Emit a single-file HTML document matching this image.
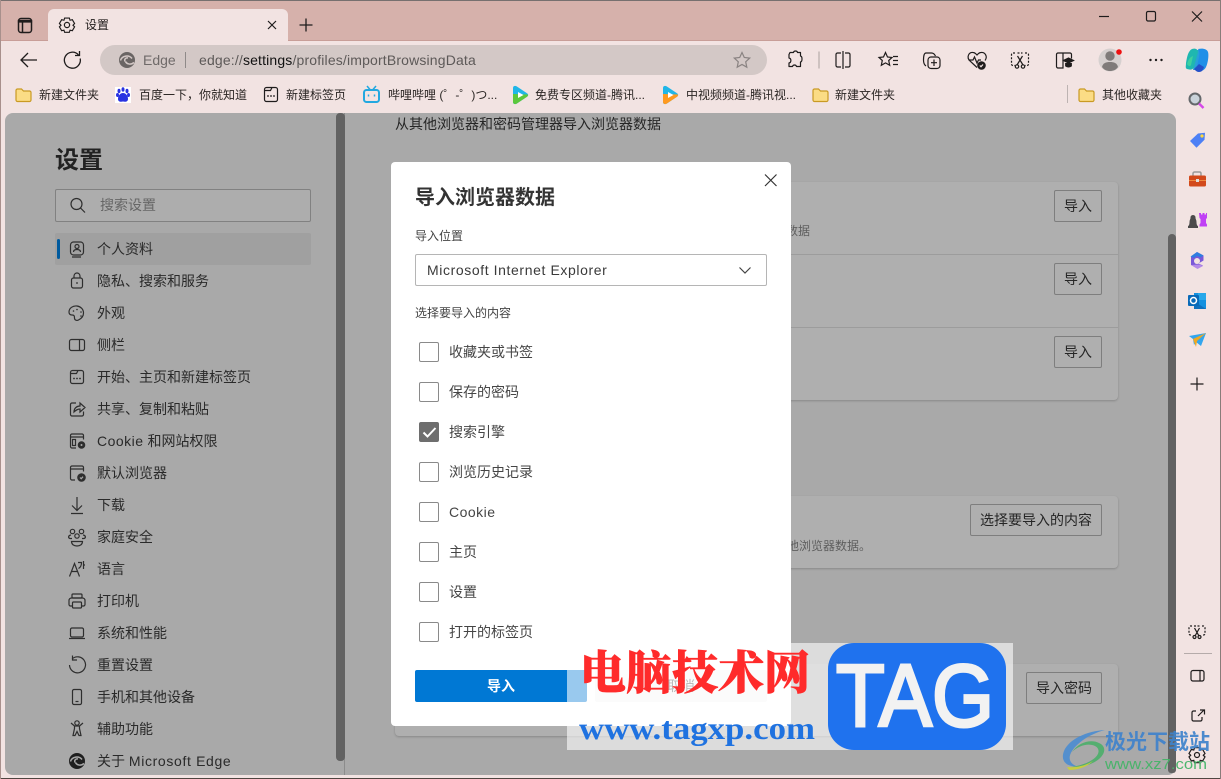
<!DOCTYPE html>
<html lang="zh"><head><meta charset="utf-8"><title>设置</title>
<style>
html,body{margin:0;padding:0}
body{width:1221px;height:779px;overflow:hidden;position:relative;background:#f2e3e2;font-family:"Liberation Sans","Noto Sans CJK SC",sans-serif;color:#262626}
.a{position:absolute;white-space:nowrap}
.t{position:absolute;white-space:nowrap;line-height:20px;height:20px}
.bm{font-size:12px;color:#2b2624;top:85px}
.nav{font-size:14px;left:97px;color:#2a2a2a}
.btn{position:absolute;box-sizing:border-box;border:1px solid #7e7e7e;border-radius:2px;font-size:14px;text-align:center;color:#262626;height:32px;line-height:31px}
.card{position:absolute;background:#afafaf;border-radius:4px;box-shadow:0 1px 2px rgba(0,0,0,.2);left:395px;width:723px}
.cb{position:absolute;left:419px;width:20px;height:20px;box-sizing:border-box;border:1px solid #8a8a8a;border-radius:2px;background:#fff}
.cl{position:absolute;left:449px;font-size:14px;color:#454545;line-height:20px;white-space:nowrap}
svg{position:absolute;overflow:visible}
</style></head><body>
<div class="a" style="left:0;top:0;width:1221px;height:41px;background:#d6b1ab;border-top:1px solid #77706f;box-sizing:border-box"></div>
<div class="a" style="left:0;top:40px;width:1221px;height:1px;background:#c89e98"></div>
<div class="a" style="left:48px;top:9px;width:240px;height:32px;background:#f2e3e2;border-radius:6px 6px 0 0"></div>
<div class="t" style="left:85px;top:15px;font-size:12px;color:#1f1a1a">设置</div>
<div class="a" style="left:100px;top:45px;width:667px;height:30px;background:#d3c8c6;border-radius:15px"></div>
<div class="t" style="left:143px;top:50px;font-size:14px;color:#6f6a69">Edge</div>
<div class="a" style="left:185px;top:52px;width:1px;height:16px;background:#8f8a89"></div>
<div class="t" style="left:199px;top:50px;font-size:14px;color:#5d5958;letter-spacing:.16px">edge://<span style="color:#111">settings</span>/profiles/importBrowsingData</div>

<div class="t bm" style="left:39px">新建文件夹</div>
<div class="t bm" style="left:139px">百度一下，你就知道</div>
<div class="t bm" style="left:286px">新建标签页</div>
<div class="t bm" style="left:388px">哔哩哔哩 (゜-゜)つ...</div>
<div class="t bm" style="left:535px">免费专区频道-腾讯...</div>
<div class="t bm" style="left:686px">中视频频道-腾讯视...</div>
<div class="t bm" style="left:835px">新建文件夹</div>
<div class="a" style="left:1067px;top:85px;width:1px;height:18px;background:#bdb3b2"></div>
<div class="t bm" style="left:1102px">其他收藏夹</div>

<!-- content -->
<div class="a" style="left:5px;top:113px;width:1171px;height:662px;background:#a9a9a9;border-radius:8px;overflow:hidden"></div>
<div class="a" style="left:344px;top:113px;width:1px;height:662px;background:#8c8c8c"></div>
<div class="a" style="left:336px;top:113px;width:9px;height:648px;background:#626262;border-radius:4px"></div>
<div class="a" style="left:1168px;top:234px;width:8px;height:539px;background:#626262;border-radius:4px 4px 3px 3px"></div>

<div class="t" style="left:55px;top:147px;font-size:24px;line-height:28px;height:28px;font-weight:700;color:#222">设置</div>
<div class="a" style="left:55px;top:189px;width:256px;height:33px;box-sizing:border-box;border:1px solid #818181;border-radius:2px;background:#adadad"></div>
<div class="t" style="left:100px;top:195px;font-size:14px;color:#666">搜索设置</div>
<div class="a" style="left:55px;top:233px;width:256px;height:32px;background:#a0a0a0;border-radius:2px"></div>
<div class="a" style="left:57px;top:239px;width:3px;height:20px;background:#005a9e;border-radius:2px"></div>

<div class="t nav" style="top:239px">个人资料</div>
<div class="t nav" style="top:271px">隐私、搜索和服务</div>
<div class="t nav" style="top:303px">外观</div>
<div class="t nav" style="top:335px">侧栏</div>
<div class="t nav" style="top:367px">开始、主页和新建标签页</div>
<div class="t nav" style="top:399px">共享、复制和粘贴</div>
<div class="t nav" style="top:431px"><span style="letter-spacing:.5px">Cookie</span> 和网站权限</div>
<div class="t nav" style="top:463px">默认浏览器</div>
<div class="t nav" style="top:495px">下载</div>
<div class="t nav" style="top:527px">家庭安全</div>
<div class="t nav" style="top:559px">语言</div>
<div class="t nav" style="top:591px">打印机</div>
<div class="t nav" style="top:623px">系统和性能</div>
<div class="t nav" style="top:655px">重置设置</div>
<div class="t nav" style="top:687px">手机和其他设备</div>
<div class="t nav" style="top:719px">辅助功能</div>
<div class="t nav" style="top:751px">关于 <span style="letter-spacing:.65px">Microsoft Edge</span></div>

<div class="t" style="left:395px;top:114px;font-size:14px;color:#262626">从其他浏览器和密码管理器导入浏览器数据</div>

<div class="card" style="top:182px;height:218px"></div>
<div class="a" style="left:395px;top:254px;width:723px;height:1px;background:#9c9c9c"></div>
<div class="a" style="left:395px;top:327px;width:723px;height:1px;background:#9c9c9c"></div>
<div class="btn" style="left:1054px;top:190px;width:48px">导入</div>
<div class="btn" style="left:1054px;top:263px;width:48px">导入</div>
<div class="btn" style="left:1054px;top:336px;width:48px">导入</div>
<div class="t" style="left:762px;top:221px;font-size:12px;color:#5e5e5e">导入数据</div>

<div class="card" style="top:496px;height:72px"></div>
<div class="btn" style="left:970px;top:504px;width:132px">选择要导入的内容</div>
<div class="t" style="left:775px;top:536px;font-size:12px;color:#5e5e5e">其他浏览器数据。</div>

<div class="card" style="top:664px;height:72px"></div>
<div class="btn" style="left:1026px;top:672px;width:76px">导入密码</div>

<!-- dialog -->
<div class="a" style="left:391px;top:162px;width:400px;height:564px;background:#fff;border-radius:4px"></div>
<div class="t" style="left:415px;top:184px;font-size:20px;line-height:28px;height:28px;font-weight:700;color:#333">导入浏览器数据</div>
<div class="t" style="left:415px;top:226px;font-size:12px;color:#444">导入位置</div>
<div class="a" style="left:415px;top:254px;width:352px;height:32px;box-sizing:border-box;border:1px solid #b5b5b5;border-radius:2px;background:#fff"></div>
<div class="t" style="left:427px;top:260px;font-size:14px;color:#3a3a3a;letter-spacing:.6px">Microsoft Internet Explorer</div>
<div class="t" style="left:415px;top:303px;font-size:12px;color:#444">选择要导入的内容</div>

<div class="cb" style="top:342px"></div><div class="cl" style="top:342px">收藏夹或书签</div>
<div class="cb" style="top:382px"></div><div class="cl" style="top:382px">保存的密码</div>
<div class="cb" style="top:422px;background:#6e6e6e;border-color:#6e6e6e"></div><div class="cl" style="top:422px">搜索引擎</div>
<div class="cb" style="top:462px"></div><div class="cl" style="top:462px">浏览历史记录</div>
<div class="cb" style="top:502px"></div><div class="cl" style="top:502px;letter-spacing:.5px">Cookie</div>
<div class="cb" style="top:542px"></div><div class="cl" style="top:542px">主页</div>
<div class="cb" style="top:582px"></div><div class="cl" style="top:582px">设置</div>
<div class="cb" style="top:622px"></div><div class="cl" style="top:622px">打开的标签页</div>

<div class="a" style="left:415px;top:670px;width:172px;height:32px;background:#0078d4;border-radius:2px;color:#fff;font-size:14px;font-weight:700;line-height:32px;text-align:center">导入</div>
<div class="a" style="left:595px;top:670px;width:172px;height:32px;background:#f5f5f5;border-radius:2px;color:#555;font-size:14px;line-height:32px;text-align:center">取消</div>

<!-- all icons -->
<svg width="1221" height="779" style="left:0;top:0" fill="none" stroke="#1f1c1c" stroke-width="1.2">
<!-- window -->
<rect x="18.5" y="18.5" width="13" height="14" rx="2.5" stroke-width="1.5"/><path d="M18.5 20.500h13v1.500h-13z" fill="#1f1c1c"/><path d="M22.500 22v10.500" stroke-width="1.500"/>
<g transform="translate(67,25)"><circle r="2.6"/><path d="M-2.5-7.3h5l.7 2.3 2.4-.6 2.4 4.1-1.7 1.7 1.7 1.7-2.4 4.1-2.4-.6-.7 2.3h-5l-.7-2.3-2.4.6-2.4-4.1 1.7-1.7-1.7-1.7 2.4-4.1 2.4.6z" transform="scale(.95)"/></g>
<path d="M268 21l8 8M276 21l-8 8" stroke-width="1.2"/>
<path d="M306 18.5v13M299.500 25h13" stroke-width="1.3"/>
<path d="M1099 16.500h10"/><rect x="1146.500" y="11.500" width="9" height="9.500" rx="1.500"/><path d="M1192 11.500l10 10M1202 11.500l-10 10"/>
<!-- nav -->
<path d="M37 60H21.500M28 53l-7 7 7 7" stroke-width="1.300"/>
<path d="M80.200 58.500a8 8 0 1 1-1.800-3.600M79.500 51v4.500h-4.500" stroke-width="1.300"/>
<g transform="translate(127,60)"><circle r="8" fill="#6a6564" stroke="none"/><path d="M-6.500.5C-5-4.500 2-5.500 5-1.500M-1.500 1.500C0 4.500 4 5 7 2.500M-2 1.500C-3-1 -1-2.500 1-2" stroke="#d3c8c6" stroke-width="1.500"/></g>
<path d="M742 52.500l2.300 5 5.400.6-4 3.700 1.100 5.400-4.800-2.700-4.800 2.700 1.100-5.400-4-3.700 5.400-.6z" stroke="#8a8382"/>
<!-- toolbar -->
<path d="M791 53h3.500c.3-2 3.700-2 4 0h3v3.500c2 .3 2 5.700 0 6v4.500h-4c-.5-2-3.500-2-4 0h-3.500v-3.500c2.500-.5 2.500-4.500 0-5v-3.500z M789 59" transform="translate(-1,-.5)" stroke-linejoin="round"/>
<path d="M819 51.500v17" stroke="#b5abaa"/>
<path d="M843 51v18M841 53h-3.500a1.500 1.500 0 0 0-1.500 1.500v11a1.500 1.500 0 0 0 1.500 1.500h3.500M845 53h3.500a1.500 1.500 0 0 1 1.500 1.500v11a1.500 1.500 0 0 1-1.500 1.500h-3.500"/>
<path d="M885.500 52.500l2 4.500 4.500.5-3.300 3 1 4.800-4.200-2.400-4.200 2.400 1-4.800-3.300-3 4.500-.5zM893 56.500h5M893 60.500h5M893 64.500h5"/>
<path d="M926 66c-1.500-1-2.500-3-2.500-6 0-4 .5-7 2.500-7h5.500c2 0 3 1 4 3"/><rect x="928" y="57" width="12" height="11.500" rx="3"/><path d="M934 59.500v6.500M931 62.700h6"/>
<path d="M977 67.500l-7-6.500c-4-4-1-9 3-8.500 2 0 3 1.500 4 2.500 1-1 2-2.500 4-2.500 4-.5 7 4 4 8M968.500 60h4.500l1.500-3 2.500 6 1.500-3h2.500"/><circle cx="981.500" cy="65.500" r="3.700" fill="#1f1c1c"/><path d="M979.800 65.500l1.200 1.200 2-2.200" stroke="#f2e3e2"/>
<path d="M1015 53h-2a1.500 1.500 0 0 0-1.500 1.500v9.500a1.500 1.500 0 0 0 1.500 1.500h2M1025 53h2a1.500 1.500 0 0 1 1.500 1.500v9.500a1.500 1.500 0 0 1-1.500 1.500h-2M1017.500 53h5" stroke-dasharray="2 1.500"/><path d="M1017.500 56l5.500 9M1022.500 56l-5.500 9"/><circle cx="1017" cy="66.500" r="1.700"/><circle cx="1023" cy="66.500" r="1.700"/>
<path d="M1063 53h-5a1.500 1.500 0 0 0-1.500 1.500v12a1.500 1.500 0 0 0 1.500 1.500h5v-15h7a1.500 1.500 0 0 1 1.500 1.500v4M1063 53v15"/><path d="M1063 60.500l5.500-2.700 5.500 2.700-5.500 2.700zM1065.500 63v3c2 1.500 4 1.500 6 0v-3" fill="#1f1c1c" stroke-width=".8"/>
<circle cx="1110" cy="60" r="11.500" fill="#d6d0cf" stroke="none"/><circle cx="1110" cy="56" r="4.700" fill="#7f7b7a" stroke="none"/><path d="M1102 67c1-4 4-5 8-5s7 1 8 5c-2 3-5 4-8 4s-6-1-8-4z" fill="#7f7b7a" stroke="none"/><circle cx="1119" cy="52" r="2.800" fill="#ee1111" stroke="none"/>
<g fill="#1f1c1c" stroke="none"><circle cx="1150.500" cy="60" r="1.200"/><circle cx="1156" cy="60" r="1.200"/><circle cx="1161.500" cy="60" r="1.200"/></g>
<!-- copilot -->
<path d="M1196 50h6l-4 20h-5z" fill="#2a9fd8" stroke="none"/>
<path d="M1192 49c3-1 6 0 6 3l-4 15c-1 3-4 3-7 2-2-1-1-3-1-6 1-6 2-12 6-14z" fill="#1fb7b0" stroke="none"/><path d="M1198 49c5-1 9 0 10 3s0 11-2 15c-2 4-6 5-10 4l3-14c1-4 0-6-1-8z" fill="#1f8fe8" stroke="none"/><path d="M1194 69c2 2 3 3 5 3 3 0 4-2 5-5l-5-3z" fill="#2450c8" stroke="none"/><path d="M1187 64c1-4 3-7 6-8l-2 9c-1 2-3 1-4-1z" fill="#3ed0a0" stroke="none"/>
<!-- bookmarks icons -->
<g id="f"><path d="M16 90.500a1.500 1.500 0 0 1 1.500-1.500h4l2 2h6a1.500 1.500 0 0 1 1.500 1.500v7.500a1.500 1.500 0 0 1-1.500 1.500h-12a1.500 1.500 0 0 1-1.500-1.500z" fill="#fbdc85" stroke="#c99a24"/></g>
<path d="M813 90.500a1.500 1.500 0 0 1 1.500-1.500h4l2 2h6a1.500 1.500 0 0 1 1.500 1.500v7.500a1.500 1.500 0 0 1-1.500 1.500h-12a1.500 1.500 0 0 1-1.500-1.500z" fill="#fbdc85" stroke="#c99a24"/>
<path d="M1079 90.500a1.500 1.500 0 0 1 1.500-1.500h4l2 2h6a1.500 1.500 0 0 1 1.500 1.500v7.500a1.500 1.500 0 0 1-1.500 1.500h-12a1.500 1.500 0 0 1-1.500-1.500z" fill="#fbdc85" stroke="#c99a24"/>
<g fill="#2932e1" stroke="none"><rect x="115" y="87" width="16" height="16" fill="#fff"/><ellipse cx="119" cy="91" rx="1.500" ry="2.200"/><ellipse cx="123" cy="89.500" rx="1.500" ry="2.200"/><ellipse cx="127" cy="91" rx="1.500" ry="2.200"/><ellipse cx="117.500" cy="95" rx="1.500" ry="2"/><ellipse cx="128.500" cy="95" rx="1.500" ry="2"/><path d="M123 93c3 0 5 3 5 6 0 3-3 3-5 2.500-2 .5-5 .5-5-2.500 0-3 2-6 5-6z"/></g>
<rect x="264.500" y="87.500" width="13" height="14" rx="2"/><path d="M264.500 90.500h6l1.500-3" /><g fill="#1f1c1c" stroke="none"><circle cx="268" cy="96" r=".9"/><circle cx="271" cy="96" r=".9"/><circle cx="274" cy="96" r=".9"/></g>
<rect x="364" y="90" width="15" height="12" rx="2.500" stroke="#22a8e0" stroke-width="2"/><path d="M367 86l3 3.500M376 86l-3 3.500" stroke="#22a8e0" stroke-width="1.500"/><path d="M368.500 94.500v2M374.500 94.500v2" stroke="#22a8e0" stroke-width="1.500"/>
<g id="p"><path d="M513 88c0-2 2-2.500 3.500-1.700l10.500 7c1.500 1 1.500 2.500 0 3.500l-10.500 7c-1.500.8-3.500.3-3.500-1.700z" fill="#20b6e8" stroke="none"/><path d="M513 94v8c0 2 2 2.500 3.500 1.700l10.500-7c1-.7 1.300-1.500 1-2.200z" fill="#5cc83c" stroke="none"/><path d="M518 92l5.500 3-5.500 3z" fill="#fff" stroke="none"/></g>
<path d="M663 88c0-2 2-2.500 3.500-1.700l10.500 7c1.500 1 1.500 2.500 0 3.500l-10.500 7c-1.500.8-3.500.3-3.500-1.700z" fill="#20b6e8" stroke="none"/><path d="M663 94v8c0 2 2 2.500 3.500 1.700l10.500-7c1-.7 1.300-1.500 1-2.200z" fill="#ff9a1f" stroke="none"/><path d="M668 92l5.500 3-5.500 3z" fill="#fff" stroke="none"/>
<!-- right rail -->
<circle cx="1195" cy="99" r="5.500" fill="#c9d3da" stroke="#64686b" stroke-width="2"/><path d="M1199 103.500l4.500 4.500" stroke="#d548e8" stroke-width="2.500"/>
<path d="M1190 141l8-7.500 7-.8-.5 7-8 8z" fill="#4d80f5" stroke="none"/><circle cx="1202" cy="136" r="1.600" fill="#ffd83a" stroke="none"/>
<path d="M1193 176v-2.500c0-1 1-1.500 1.500-1.500h5c1 0 1.500.5 1.500 1.500v2.500" stroke="#9a9a9a" stroke-width="1.500"/><rect x="1189" y="175.500" width="17" height="11" rx="1.500" fill="#d2491b" stroke="none"/><rect x="1189" y="180" width="17" height="1" fill="#f08a40" stroke="none"/><rect x="1196" y="179" width="3" height="3" fill="#ddd" stroke="none"/>
<path d="M1193 215a2.500 2.500 0 0 1 2.500 3c0 1 1 2 1 4s.5 4 1.500 4v2h-10v-2c1 0 1.500-2 1.500-4s1-3 1-4a2.500 2.500 0 0 1 2.500-3z" fill="#4b4b4b" stroke="none"/><path d="M1199 213h2v1.500h1.500V213h2v1.500h1.500V213h1v5l-1 1v4l1 1.500v2h-7.500v-2l1-1.500v-4l-1-1z" fill="#c040f5" stroke="none"/>
<path d="M1197 252l6.500 3.500v5l-5 3 4.500 2-5.500 3-6.500-3.500v-8z" fill="#7a58d8" stroke="none"/><path d="M1197 252l6.500 3.500-3 2-3.500-1.500-3 2-3.500-1.500z" fill="#2f7de0" stroke="none"/><circle cx="1197" cy="261" r="3" fill="#f2e3e2" stroke="none"/><path d="M1191 265l6.500 4 5.500-3-3-1.500z" fill="#b58ae8" stroke="none"/>
<rect x="1194" y="293" width="12" height="16" fill="#1490df" stroke="none"/><rect x="1198" y="293" width="8" height="7" fill="#28a8ea" stroke="none"/><path d="M1194 301l12 8h-12z" fill="#0f70bd" stroke="none"/><rect x="1188" y="295" width="11" height="11" rx="1" fill="#0a6ab8" stroke="none"/><circle cx="1193.500" cy="300.500" r="3" stroke="#fff" stroke-width="1.500"/>
<path d="M1189 336l17-3-5 13-5-4-2 3-1-6z" fill="#33a6ee" stroke="none"/><path d="M1193 339l13-6-9 8-1 6z" fill="#f0a820" stroke="none"/>
<path d="M1197 377.500v13M1190.500 384h13"/>
<path d="M1192 626h-1.500a1.500 1.500 0 0 0-1.500 1.500v6a1.500 1.500 0 0 0 1.500 1.500h1.500M1202 626h1.500a1.500 1.500 0 0 1 1.500 1.500v6a1.500 1.500 0 0 1-1.500 1.500h-1.500M1194 626h6" stroke-dasharray="2 1.500"/><path d="M1194.500 628l4.500 8M1199.500 628l-4.500 8"/><circle cx="1194.500" cy="637" r="1.500"/><circle cx="1199.500" cy="637" r="1.500"/>
<rect x="1184" y="653" width="28" height="1" fill="#b5abaa" stroke="none"/>
<rect x="1191" y="670.500" width="13" height="10.500" rx="2"/><path d="M1200 670.500v10.500"/>
<path d="M1196 711h-2.500a1.500 1.500 0 0 0-1.500 1.500v7a1.500 1.500 0 0 0 1.500 1.500h7a1.500 1.500 0 0 0 1.500-1.500V717M1198 716l6-6M1200 710h4.500v4.500"/>
<g transform="translate(1197,755)"><circle r="2.500"/><path d="M-2.500-7.300h5l.7 2.300 2.400-.6 2.400 4.100-1.700 1.700 1.700 1.700-2.400 4.100-2.400-.6-.7 2.300h-5l-.7-2.300-2.400.6-2.400-4.100 1.700-1.700-1.700-1.700 2.400-4.100 2.400.6z"/></g>
<!-- settings nav icons -->
<g stroke="#2e2e2e">
<circle cx="76.500" cy="204" r="5.500"/><path d="M80.500 208l4.500 4.500"/>
<rect x="70.500" y="242" width="13" height="13" rx="3"/><circle cx="77" cy="246.500" r="2"/><path d="M73.500 252c0-2 1.500-2.500 3.500-2.500s3.500.5 3.500 2.500M72 257h9"/>
<rect x="71.500" y="278" width="11" height="10" rx="2"/><path d="M74 278v-2a3 3 0 0 1 6 0v2"/><circle cx="77" cy="283" r=".9" fill="#2e2e2e" stroke="none"/>
<path d="M77 306c-4-.5-8 2-8 6 0 2 1 3 3 3 2.500 0 2.500 1.500 2.500 3 0 2 2 3 4 2 3-1.500 5-4 5-7 0-4-3-6.500-6.500-7z"/><g fill="#2e2e2e" stroke="none"><circle cx="73.500" cy="311" r=".8"/><circle cx="77" cy="309.500" r=".8"/><circle cx="81" cy="312" r=".8"/><circle cx="81" cy="316" r=".8"/></g>
<rect x="69.500" y="339.500" width="15" height="11" rx="2"/><path d="M79.500 339.500v11"/>
<rect x="70.500" y="370.500" width="13" height="13" rx="2"/><path d="M70.500 373.500h6l1.500-3"/><g fill="#2e2e2e" stroke="none"><circle cx="74" cy="378.500" r=".9"/><circle cx="77" cy="378.500" r=".9"/><circle cx="80" cy="378.500" r=".9"/></g>
<path d="M76 403h-4a1.500 1.500 0 0 0-1.500 1.500v10a1.500 1.500 0 0 0 1.500 1.500h10a1.500 1.500 0 0 0 1.500-1.500v-3M74 412c0-4 3-6 6-6v-3l5 4.500-5 4.500v-3c-2 0-4 1-6 3z"/>
<path d="M76 448h-4a1.500 1.500 0 0 1-1.500-1.500v-11a1.500 1.500 0 0 1 1.500-1.500h10a1.500 1.500 0 0 1 1.500 1.500v4M70.500 437h13"/><rect x="72.500" y="439.500" width="3" height="6"/><circle cx="81.500" cy="445" r="3.200" fill="#2e2e2e"/><circle cx="81.500" cy="445" r="1" fill="#a9a9a9" stroke="none"/>
<path d="M75 480h-3a1.500 1.500 0 0 1-1.500-1.500v-11a1.500 1.500 0 0 1 1.500-1.500h10a1.500 1.500 0 0 1 1.500 1.500v4M70.500 469h13"/><circle cx="81.500" cy="477.500" r="3.700" fill="#2e2e2e"/><path d="M80 477.500l1.200 1.200 1.800-2" stroke="#a9a9a9"/>
<path d="M77 497v13M72 505.500l5 5 5-5M71 513.500h12"/>
<circle cx="72.500" cy="531.500" r="2.200"/><circle cx="81.500" cy="531.500" r="2.200"/><circle cx="77" cy="536" r="2.200"/><path d="M71 535c-3 .5-3 3-1 3.500h2M83 535c3 .5 3 3 1 3.500h-2M71.500 541.500h11c0 3-2.500 4.500-5.500 4.500s-5.500-1.500-5.500-4.500z"/>
<path d="M69.500 576.500l5-13 5 13M71.500 571.500h6M78 562.500h3.500c0 3-1 5-3 6M83.500 561v8M83.500 565h1.500"/>
<rect x="72" y="594" width="10" height="4" rx="1"/><path d="M72 606h-1.500a1.500 1.500 0 0 1-1.500-1.500v-4a2.500 2.500 0 0 1 2.500-2.500h11a2.500 2.500 0 0 1 2.500 2.500v4a1.500 1.500 0 0 1-1.500 1.500H82"/><rect x="72.500" y="602" width="9" height="6" rx="1"/>
<rect x="70.500" y="628" width="13" height="9" rx="1.500"/><path d="M69 638.500h16"/>
<path d="M72 659a8 8 0 1 1-2.500 6M72.500 655.500V660H77"/>
<rect x="72.500" y="689.500" width="9" height="15" rx="1.500"/><path d="M75.500 701.500h3"/>
<circle cx="77" cy="723" r="2.200"/><path d="M71 723l3.500 3h5l3.500-3M74.500 726v2.500l-1.500 7h2l2-4 2 4h2l-1.500-7V726"/>
</g>
<g transform="translate(77,761)"><circle r="8" fill="#1f1f1f" stroke="none"/><path d="M-6.500.5C-5-4.500 2-5.500 5-1.500M-1.500 1.500C0 4.500 4 5 7 2.500M-2 1.500C-3-1 -1-2.500 1-2" stroke="#a9a9a9" stroke-width="1.500"/></g>
<!-- dialog icons -->
<path d="M765 174.500l11.500 11.500M776.500 174.500L765 186" stroke="#333"/>
<path d="M739.500 267.500l5.500 5.500 5.500-5.500" stroke="#444"/>
<path d="M423.500 432.500l4 4 8-8.500" stroke="#fff" stroke-width="2"/>
</svg>

<!-- window edges -->
<div class="a" style="left:0;top:778px;width:1221px;height:1px;background:#4f4540"></div>
<div class="a" style="left:1220px;top:0;width:1px;height:779px;background:#8a7c7a"></div>
<div class="a" style="left:0;top:0;width:1px;height:779px;background:#a8908c"></div>

<!-- tagxp watermark -->
<div class="a" style="left:567px;top:643px;width:446px;height:107px;background:rgba(255,255,255,.6)"></div>
<div class="a" style="left:828px;top:643px;width:178px;height:107px;background:#1f72ee;border-radius:26px"></div>
<svg width="1221" height="779" style="left:0;top:0">
<text x="580" y="689" font-family="'Noto Serif CJK SC',serif" font-weight="900" font-size="46" fill="#ff2b2b" stroke="#ff2b2b" stroke-width=".6" textLength="230">电脑技术网</text>
<text x="579" y="739" font-family="'Liberation Serif',serif" font-weight="700" font-size="32" fill="#1f72e0" textLength="236" lengthAdjust="spacingAndGlyphs">www.tagxp.com</text>
<text x="836" y="726" font-family="'Liberation Sans',sans-serif" font-size="88" fill="#f2f2f2" stroke="#f2f2f2" stroke-width="3" textLength="158" lengthAdjust="spacingAndGlyphs">TAG</text>
<path d="M1105 730c-18 1-36 9-41 21-4 10 3 16 12 15-7-3-8-9-4-15 6-9 18-17 33-21z" fill="#4f8dcf" opacity=".95"/>
<path d="M1072 752c7-7 17-9 23-6 6 3 4 10-3 14-6 4-14 6-21 7 9 1 21-2 28-8 7-6 7-13 0-16-8-4-20-1-27 9z" fill="#4fae6d" opacity=".95"/>
<path d="M1067 767c8 1 18-1 26-6-6 6-15 9-24 9z" fill="#c9cf3a" opacity=".95"/>
<text x="1105" y="749" font-family="'Liberation Sans','Noto Sans CJK SC',sans-serif" font-weight="700" font-size="21" fill="#3f83cc" textLength="105" opacity=".92">极光下载站</text>
<text x="1105" y="769" font-family="'Liberation Sans',sans-serif" font-size="15" fill="#45b468" textLength="102" lengthAdjust="spacingAndGlyphs" opacity=".95">www.xz7.com</text>
</svg>
</body></html>
